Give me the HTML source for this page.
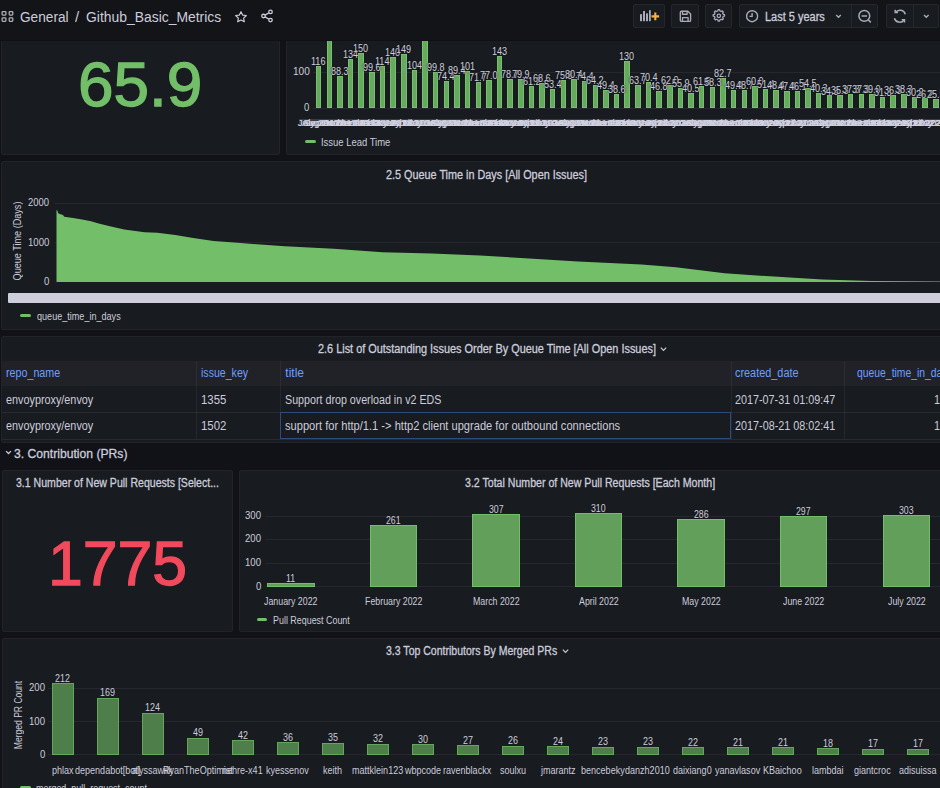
<!DOCTYPE html>
<html><head><meta charset="utf-8"><style>
html,body{margin:0;padding:0;}
body{width:940px;height:788px;overflow:hidden;background:#111217;position:relative;font-family:"Liberation Sans", sans-serif;}
.t{position:absolute;white-space:nowrap;}
.r{position:absolute;}
.clip{position:absolute;overflow:hidden;}
.p{position:absolute;background:#181b1f;border:1px solid #212328;border-radius:2px;box-sizing:border-box;}
.btn{position:absolute;background:#181b1f;border:1px solid #25272c;border-radius:2px;box-sizing:border-box;}
</style></head><body>
<div class="p" style="left:1px;top:20px;width:279px;height:135px;"></div>
<div class="p" style="left:286px;top:20px;width:660px;height:135px;"></div>
<div class="p" style="left:1px;top:161px;width:945px;height:169px;"></div>
<div class="p" style="left:1px;top:336px;width:945px;height:107px;"></div>
<div class="p" style="left:2px;top:470px;width:231px;height:162px;"></div>
<div class="p" style="left:239px;top:470px;width:707px;height:162px;"></div>
<div class="p" style="left:2px;top:638px;width:944px;height:160px;"></div>
<div class="r" style="left:0.00px;top:0.00px;width:940.00px;height:40.00px;background:#131418;"></div>
<div class="r" style="left:0.00px;top:39.50px;width:940.00px;height:1.00px;background:#0f1013;"></div>
<svg class="r" style="left:0;top:0" width="40" height="40"><g fill="none" stroke="#b0b1bd" stroke-width="1.25"><rect x="2.1" y="11.5" width="3.8" height="3.6" rx="0.8"/><rect x="9.2" y="11.5" width="3.6" height="3.6" rx="0.8"/><rect x="2.1" y="17.8" width="3.8" height="3.6" rx="0.8"/><rect x="9.2" y="17.8" width="3.6" height="3.6" rx="0.8"/></g></svg>
<div class="t" style="left:20.02px;top:7.65px;font-size:14.7px;line-height:19px;color:#ccccdc;font-weight:400;transform:scaleX(0.9294);transform-origin:0 0;">General</div>
<div class="t" style="left:75.00px;top:7.65px;font-size:14.7px;line-height:19px;color:#ccccdc;font-weight:400;transform:scaleX(1.0204);transform-origin:0 0;">/</div>
<div class="t" style="left:86.40px;top:7.65px;font-size:14.7px;line-height:19px;color:#ccccdc;font-weight:400;transform:scaleX(0.9463);transform-origin:0 0;">Github_Basic_Metrics</div>
<svg class="r" style="left:234px;top:10px" width="14" height="14" viewBox="0 0 24 24"><path d="M12 2.8l2.8 5.9 6.4.8-4.7 4.4 1.2 6.3L12 17.1l-5.7 3.1 1.2-6.3-4.7-4.4 6.4-.8z" fill="none" stroke="#ccccdc" stroke-width="2" stroke-linejoin="round"/></svg>
<svg class="r" style="left:260px;top:9.3px" width="14" height="14" viewBox="0 0 24 24"><g fill="none" stroke="#ccccdc" stroke-width="2.2"><circle cx="18" cy="5" r="3"/><circle cx="6" cy="12" r="3"/><circle cx="18" cy="19" r="3"/><path d="M8.6 10.5l6.8-4M8.6 13.5l6.8 4"/></g></svg>
<div class="btn" style="left:633px;top:4px;width:32px;height:24px;"></div>
<svg class="r" style="left:0;top:0" width="940" height="40"><g fill="#a9aab6"><rect x="640" y="14.2" width="2" height="7"/><rect x="643" y="11" width="2" height="10.2"/><rect x="646" y="13.4" width="2" height="7.8"/><rect x="649" y="10.2" width="1.8" height="11"/></g><path d="M655.3 12.6v7.6M651.5 16.4h7.6" stroke="#f7b23b" stroke-width="2.1"/></svg>
<div class="btn" style="left:671px;top:4px;width:28px;height:24px;"></div>
<svg class="r" style="left:0;top:0" width="940" height="40"><g fill="none" stroke="#a9aab6" stroke-width="1.35" stroke-linejoin="round"><path d="M681.5 11.2h6.3l2.8 2.8v6.2a1.2 1.2 0 0 1-1.2 1.2h-7.9a1.2 1.2 0 0 1-1.2-1.2v-7.8a1.2 1.2 0 0 1 1.2-1.2z"/><path d="M682.5 11.4v2.8h4.6v-2.8"/><path d="M682.5 21.2v-3.6h5.6v3.6"/></g></svg>
<div class="btn" style="left:705px;top:4px;width:27px;height:24px;"></div>
<svg class="r" style="left:710.9px;top:8.25px" width="15.7" height="15.7" viewBox="0 0 24 24"><g fill="none" stroke="#a9aab6" stroke-width="2" stroke-linejoin="round"><circle cx="12" cy="12" r="2.6"/><path d="M10.3 4.6l.6-2h2.2l.6 2 1.7.8 1.9-1 1.6 1.6-1 1.9.8 1.7 2 .6v2.2l-2 .6-.8 1.7 1 1.9-1.6 1.6-1.9-1-1.7.8-.6 2h-2.2l-.6-2-1.7-.8-1.9 1-1.6-1.6 1-1.9-.8-1.7-2-.6v-2.2l2-.6.8-1.7-1-1.9 1.6-1.6 1.9 1z"/></g></svg>
<div class="btn" style="left:739px;top:4px;width:139px;height:24px;"></div>
<div class="r" style="left:851.00px;top:5.00px;width:1.00px;height:22.00px;background:#25272c;"></div>
<svg class="r" style="left:0;top:0" width="940" height="40"><g fill="none" stroke="#a9aab6" stroke-width="1.4"><circle cx="752.1" cy="16.2" r="5.5"/><path d="M752.1 12.9v3.5h-2.6"/></g></svg>
<div class="t" style="left:764.82px;top:9.00px;font-size:12.5px;line-height:16px;color:#ccccdc;font-weight:400;transform:scaleX(0.8780);transform-origin:0 0;-webkit-text-stroke:0.3px #ccccdc;">Last 5 years</div>
<svg class="r" style="left:0;top:0" width="940" height="40"><path d="M836.2 15l2.3 2.3 2.3-2.3" fill="none" stroke="#a9aab6" stroke-width="1.4"/></svg>
<svg class="r" style="left:0;top:0" width="940" height="40"><g fill="none" stroke="#a9aab6" stroke-width="1.5"><circle cx="864.3" cy="15.9" r="5.4"/><path d="M861.6 15.9h5.4M868.2 19.8l2.6 2.6"/></g></svg>
<div class="btn" style="left:886px;top:4px;width:53px;height:24px;"></div>
<div class="r" style="left:913.00px;top:5.00px;width:1.00px;height:22.00px;background:#25272c;"></div>
<svg class="r" style="left:0;top:0" width="940" height="40"><g fill="none" stroke="#a9aab6" stroke-width="1.5"><path d="M905.3 14.2a5.6 5.6 0 0 0-9.8-1.8M894.4 18.2a5.6 5.6 0 0 0 9.8 1.8"/><path d="M895.2 9.8v2.8h2.8M904.5 22.6v-2.8h-2.8"/></g></svg>
<svg class="r" style="left:0;top:0" width="940" height="40"><path d="M924 15l2.3 2.3 2.3-2.3" fill="none" stroke="#a9aab6" stroke-width="1.4"/></svg>
<div class="t" style="left:77.71px;top:43.80px;font-size:62.4px;line-height:81px;color:#73bf69;font-weight:400;transform:scaleX(1.0239);transform-origin:0 0;-webkit-text-stroke:1.3px #73bf69;">65.9</div>
<div class="t" style="left:292.84px;top:65.20px;font-size:10.2px;line-height:13px;color:#ccccdc;font-weight:400;transform:scaleX(0.9898);transform-origin:0 0;">100</div>
<div class="t" style="left:304.31px;top:100.50px;font-size:10.2px;line-height:13px;color:#ccccdc;font-weight:400;transform:scaleX(0.9400);transform-origin:0 0;">0</div>
<div class="r" style="left:313.00px;top:72.00px;width:640.00px;height:1.00px;background:rgba(204,204,220,0.08);"></div>
<div class="r" style="left:313.00px;top:108.00px;width:640.00px;height:1.00px;background:rgba(204,204,220,0.08);"></div>
<div class="clip" style="left:286px;top:41px;width:654px;height:114px;">
<div class="r" style="left:29.90px;top:24.66px;width:5.50px;height:42.34px;background:#67aa5f;border:1px solid #76c26c;box-sizing:border-box;"></div>
<div class="r" style="left:40.54px;top:-2.35px;width:5.50px;height:69.35px;background:#67aa5f;border:1px solid #76c26c;box-sizing:border-box;"></div>
<div class="r" style="left:51.18px;top:34.77px;width:5.50px;height:32.23px;background:#67aa5f;border:1px solid #76c26c;box-sizing:border-box;"></div>
<div class="r" style="left:61.82px;top:18.09px;width:5.50px;height:48.91px;background:#67aa5f;border:1px solid #76c26c;box-sizing:border-box;"></div>
<div class="r" style="left:72.46px;top:12.25px;width:5.50px;height:54.75px;background:#67aa5f;border:1px solid #76c26c;box-sizing:border-box;"></div>
<div class="r" style="left:83.10px;top:30.65px;width:5.50px;height:36.35px;background:#67aa5f;border:1px solid #76c26c;box-sizing:border-box;"></div>
<div class="r" style="left:93.74px;top:25.39px;width:5.50px;height:41.61px;background:#67aa5f;border:1px solid #76c26c;box-sizing:border-box;"></div>
<div class="r" style="left:104.38px;top:15.90px;width:5.50px;height:51.10px;background:#67aa5f;border:1px solid #76c26c;box-sizing:border-box;"></div>
<div class="r" style="left:115.02px;top:12.62px;width:5.50px;height:54.38px;background:#67aa5f;border:1px solid #76c26c;box-sizing:border-box;"></div>
<div class="r" style="left:125.66px;top:29.04px;width:5.50px;height:37.96px;background:#67aa5f;border:1px solid #76c26c;box-sizing:border-box;"></div>
<div class="r" style="left:136.30px;top:-2.35px;width:5.50px;height:69.35px;background:#67aa5f;border:1px solid #76c26c;box-sizing:border-box;"></div>
<div class="r" style="left:146.94px;top:30.57px;width:5.50px;height:36.43px;background:#67aa5f;border:1px solid #76c26c;box-sizing:border-box;"></div>
<div class="r" style="left:157.58px;top:39.84px;width:5.50px;height:27.16px;background:#67aa5f;border:1px solid #76c26c;box-sizing:border-box;"></div>
<div class="r" style="left:168.22px;top:34.37px;width:5.50px;height:32.63px;background:#67aa5f;border:1px solid #76c26c;box-sizing:border-box;"></div>
<div class="r" style="left:178.86px;top:30.13px;width:5.50px;height:36.87px;background:#67aa5f;border:1px solid #76c26c;box-sizing:border-box;"></div>
<div class="r" style="left:189.50px;top:40.83px;width:5.50px;height:26.17px;background:#67aa5f;border:1px solid #76c26c;box-sizing:border-box;"></div>
<div class="r" style="left:200.14px;top:38.89px;width:5.50px;height:28.11px;background:#67aa5f;border:1px solid #76c26c;box-sizing:border-box;"></div>
<div class="r" style="left:210.78px;top:14.80px;width:5.50px;height:52.20px;background:#67aa5f;border:1px solid #76c26c;box-sizing:border-box;"></div>
<div class="r" style="left:221.42px;top:38.27px;width:5.50px;height:28.73px;background:#67aa5f;border:1px solid #76c26c;box-sizing:border-box;"></div>
<div class="r" style="left:232.06px;top:37.84px;width:5.50px;height:29.16px;background:#67aa5f;border:1px solid #76c26c;box-sizing:border-box;"></div>
<div class="r" style="left:242.70px;top:44.66px;width:5.50px;height:22.34px;background:#67aa5f;border:1px solid #76c26c;box-sizing:border-box;"></div>
<div class="r" style="left:253.34px;top:41.96px;width:5.50px;height:25.04px;background:#67aa5f;border:1px solid #76c26c;box-sizing:border-box;"></div>
<div class="r" style="left:263.98px;top:47.51px;width:5.50px;height:19.49px;background:#67aa5f;border:1px solid #76c26c;box-sizing:border-box;"></div>
<div class="r" style="left:274.62px;top:39.33px;width:5.50px;height:27.67px;background:#67aa5f;border:1px solid #76c26c;box-sizing:border-box;"></div>
<div class="r" style="left:285.26px;top:37.65px;width:5.50px;height:29.35px;background:#67aa5f;border:1px solid #76c26c;box-sizing:border-box;"></div>
<div class="r" style="left:295.90px;top:39.84px;width:5.50px;height:27.16px;background:#67aa5f;border:1px solid #76c26c;box-sizing:border-box;"></div>
<div class="r" style="left:306.54px;top:43.57px;width:5.50px;height:23.43px;background:#67aa5f;border:1px solid #76c26c;box-sizing:border-box;"></div>
<div class="r" style="left:317.18px;top:48.97px;width:5.50px;height:18.03px;background:#67aa5f;border:1px solid #76c26c;box-sizing:border-box;"></div>
<div class="r" style="left:327.82px;top:52.91px;width:5.50px;height:14.09px;background:#67aa5f;border:1px solid #76c26c;box-sizing:border-box;"></div>
<div class="r" style="left:338.46px;top:19.55px;width:5.50px;height:47.45px;background:#67aa5f;border:1px solid #76c26c;box-sizing:border-box;"></div>
<div class="r" style="left:349.10px;top:43.75px;width:5.50px;height:23.25px;background:#67aa5f;border:1px solid #76c26c;box-sizing:border-box;"></div>
<div class="r" style="left:359.74px;top:41.30px;width:5.50px;height:25.70px;background:#67aa5f;border:1px solid #76c26c;box-sizing:border-box;"></div>
<div class="r" style="left:370.38px;top:49.92px;width:5.50px;height:17.08px;background:#67aa5f;border:1px solid #76c26c;box-sizing:border-box;"></div>
<div class="r" style="left:381.02px;top:44.37px;width:5.50px;height:22.63px;background:#67aa5f;border:1px solid #76c26c;box-sizing:border-box;"></div>
<div class="r" style="left:391.66px;top:46.60px;width:5.50px;height:20.40px;background:#67aa5f;border:1px solid #76c26c;box-sizing:border-box;"></div>
<div class="r" style="left:402.30px;top:52.22px;width:5.50px;height:14.78px;background:#67aa5f;border:1px solid #76c26c;box-sizing:border-box;"></div>
<div class="r" style="left:412.94px;top:44.55px;width:5.50px;height:22.45px;background:#67aa5f;border:1px solid #76c26c;box-sizing:border-box;"></div>
<div class="r" style="left:423.58px;top:45.72px;width:5.50px;height:21.28px;background:#67aa5f;border:1px solid #76c26c;box-sizing:border-box;"></div>
<div class="r" style="left:434.22px;top:36.81px;width:5.50px;height:30.19px;background:#67aa5f;border:1px solid #76c26c;box-sizing:border-box;"></div>
<div class="r" style="left:444.86px;top:48.97px;width:5.50px;height:18.03px;background:#67aa5f;border:1px solid #76c26c;box-sizing:border-box;"></div>
<div class="r" style="left:455.50px;top:49.22px;width:5.50px;height:17.78px;background:#67aa5f;border:1px solid #76c26c;box-sizing:border-box;"></div>
<div class="r" style="left:466.14px;top:45.10px;width:5.50px;height:21.90px;background:#67aa5f;border:1px solid #76c26c;box-sizing:border-box;"></div>
<div class="r" style="left:476.78px;top:48.24px;width:5.50px;height:18.76px;background:#67aa5f;border:1px solid #76c26c;box-sizing:border-box;"></div>
<div class="r" style="left:487.42px;top:49.33px;width:5.50px;height:17.67px;background:#67aa5f;border:1px solid #76c26c;box-sizing:border-box;"></div>
<div class="r" style="left:498.06px;top:49.70px;width:5.50px;height:17.30px;background:#67aa5f;border:1px solid #76c26c;box-sizing:border-box;"></div>
<div class="r" style="left:508.70px;top:50.17px;width:5.50px;height:16.83px;background:#67aa5f;border:1px solid #76c26c;box-sizing:border-box;"></div>
<div class="r" style="left:519.34px;top:47.11px;width:5.50px;height:19.89px;background:#67aa5f;border:1px solid #76c26c;box-sizing:border-box;"></div>
<div class="r" style="left:529.98px;top:52.29px;width:5.50px;height:14.71px;background:#67aa5f;border:1px solid #76c26c;box-sizing:border-box;"></div>
<div class="r" style="left:540.62px;top:54.48px;width:5.50px;height:12.52px;background:#67aa5f;border:1px solid #76c26c;box-sizing:border-box;"></div>
<div class="r" style="left:551.26px;top:54.12px;width:5.50px;height:12.88px;background:#67aa5f;border:1px solid #76c26c;box-sizing:border-box;"></div>
<div class="r" style="left:561.90px;top:53.39px;width:5.50px;height:13.61px;background:#67aa5f;border:1px solid #76c26c;box-sizing:border-box;"></div>
<div class="r" style="left:572.54px;top:53.39px;width:5.50px;height:13.61px;background:#67aa5f;border:1px solid #76c26c;box-sizing:border-box;"></div>
<div class="r" style="left:583.18px;top:52.77px;width:5.50px;height:14.23px;background:#67aa5f;border:1px solid #76c26c;box-sizing:border-box;"></div>
<div class="r" style="left:593.82px;top:55.58px;width:5.50px;height:11.42px;background:#67aa5f;border:1px solid #76c26c;box-sizing:border-box;"></div>
<div class="r" style="left:604.46px;top:53.75px;width:5.50px;height:13.25px;background:#67aa5f;border:1px solid #76c26c;box-sizing:border-box;"></div>
<div class="r" style="left:615.10px;top:53.02px;width:5.50px;height:13.98px;background:#67aa5f;border:1px solid #76c26c;box-sizing:border-box;"></div>
<div class="r" style="left:625.74px;top:55.98px;width:5.50px;height:11.02px;background:#67aa5f;border:1px solid #76c26c;box-sizing:border-box;"></div>
<div class="r" style="left:636.38px;top:57.44px;width:5.50px;height:9.56px;background:#67aa5f;border:1px solid #76c26c;box-sizing:border-box;"></div>
<div class="r" style="left:647.02px;top:57.69px;width:5.50px;height:9.31px;background:#67aa5f;border:1px solid #76c26c;box-sizing:border-box;"></div>
<div class="t" style="left:25.26px;top:12.76px;font-size:10.8px;line-height:14px;color:#ccccdc;font-weight:400;transform:scaleX(0.8400);transform-origin:0 0;text-shadow:0 0 1.5px #181b1f,0 0 1px #181b1f;">116</div>
<div class="t" style="left:45.11px;top:22.87px;font-size:10.8px;line-height:14px;color:#ccccdc;font-weight:400;transform:scaleX(0.8400);transform-origin:0 0;text-shadow:0 0 1.5px #181b1f,0 0 1px #181b1f;">88.3</div>
<div class="t" style="left:56.79px;top:6.19px;font-size:10.8px;line-height:14px;color:#ccccdc;font-weight:400;transform:scaleX(0.8400);transform-origin:0 0;text-shadow:0 0 1.5px #181b1f,0 0 1px #181b1f;">134</div>
<div class="t" style="left:67.48px;top:0.35px;font-size:10.8px;line-height:14px;color:#ccccdc;font-weight:400;transform:scaleX(0.8400);transform-origin:0 0;text-shadow:0 0 1.5px #181b1f,0 0 1px #181b1f;">150</div>
<div class="t" style="left:77.00px;top:18.75px;font-size:10.8px;line-height:14px;color:#ccccdc;font-weight:400;transform:scaleX(0.8400);transform-origin:0 0;text-shadow:0 0 1.5px #181b1f,0 0 1px #181b1f;">99.6</div>
<div class="t" style="left:89.03px;top:13.49px;font-size:10.8px;line-height:14px;color:#ccccdc;font-weight:400;transform:scaleX(0.8400);transform-origin:0 0;text-shadow:0 0 1.5px #181b1f,0 0 1px #181b1f;">114</div>
<div class="t" style="left:99.40px;top:4.00px;font-size:10.8px;line-height:14px;color:#ccccdc;font-weight:400;transform:scaleX(0.8400);transform-origin:0 0;text-shadow:0 0 1.5px #181b1f,0 0 1px #181b1f;">140</div>
<div class="t" style="left:110.08px;top:0.72px;font-size:10.8px;line-height:14px;color:#ccccdc;font-weight:400;transform:scaleX(0.8400);transform-origin:0 0;text-shadow:0 0 1.5px #181b1f,0 0 1px #181b1f;">149</div>
<div class="t" style="left:120.63px;top:17.14px;font-size:10.8px;line-height:14px;color:#ccccdc;font-weight:400;transform:scaleX(0.8400);transform-origin:0 0;text-shadow:0 0 1.5px #181b1f,0 0 1px #181b1f;">104</div>
<div class="t" style="left:140.84px;top:18.67px;font-size:10.8px;line-height:14px;color:#ccccdc;font-weight:400;transform:scaleX(0.8400);transform-origin:0 0;text-shadow:0 0 1.5px #181b1f,0 0 1px #181b1f;">99.8</div>
<div class="t" style="left:151.39px;top:27.94px;font-size:10.8px;line-height:14px;color:#ccccdc;font-weight:400;transform:scaleX(0.8400);transform-origin:0 0;text-shadow:0 0 1.5px #181b1f,0 0 1px #181b1f;">74.4</div>
<div class="t" style="left:162.08px;top:22.47px;font-size:10.8px;line-height:14px;color:#ccccdc;font-weight:400;transform:scaleX(0.8400);transform-origin:0 0;text-shadow:0 0 1.5px #181b1f,0 0 1px #181b1f;">89.4</div>
<div class="t" style="left:173.92px;top:18.23px;font-size:10.8px;line-height:14px;color:#ccccdc;font-weight:400;transform:scaleX(0.8400);transform-origin:0 0;text-shadow:0 0 1.5px #181b1f,0 0 1px #181b1f;">101</div>
<div class="t" style="left:183.43px;top:28.93px;font-size:10.8px;line-height:14px;color:#ccccdc;font-weight:400;transform:scaleX(0.8400);transform-origin:0 0;text-shadow:0 0 1.5px #181b1f,0 0 1px #181b1f;">71.7</div>
<div class="t" style="left:194.00px;top:26.99px;font-size:10.8px;line-height:14px;color:#ccccdc;font-weight:400;transform:scaleX(0.8400);transform-origin:0 0;text-shadow:0 0 1.5px #181b1f,0 0 1px #181b1f;">77.0</div>
<div class="t" style="left:205.82px;top:2.91px;font-size:10.8px;line-height:14px;color:#ccccdc;font-weight:400;transform:scaleX(0.8400);transform-origin:0 0;text-shadow:0 0 1.5px #181b1f,0 0 1px #181b1f;">143</div>
<div class="t" style="left:215.35px;top:26.37px;font-size:10.8px;line-height:14px;color:#ccccdc;font-weight:400;transform:scaleX(0.8400);transform-origin:0 0;text-shadow:0 0 1.5px #181b1f,0 0 1px #181b1f;">78.7</div>
<div class="t" style="left:225.96px;top:25.94px;font-size:10.8px;line-height:14px;color:#ccccdc;font-weight:400;transform:scaleX(0.8400);transform-origin:0 0;text-shadow:0 0 1.5px #181b1f,0 0 1px #181b1f;">79.9</div>
<div class="t" style="left:236.63px;top:32.76px;font-size:10.8px;line-height:14px;color:#ccccdc;font-weight:400;transform:scaleX(0.8400);transform-origin:0 0;text-shadow:0 0 1.5px #181b1f,0 0 1px #181b1f;">61.2</div>
<div class="t" style="left:247.22px;top:30.06px;font-size:10.8px;line-height:14px;color:#ccccdc;font-weight:400;transform:scaleX(0.8400);transform-origin:0 0;text-shadow:0 0 1.5px #181b1f,0 0 1px #181b1f;">68.6</div>
<div class="t" style="left:257.84px;top:35.61px;font-size:10.8px;line-height:14px;color:#ccccdc;font-weight:400;transform:scaleX(0.8400);transform-origin:0 0;text-shadow:0 0 1.5px #181b1f,0 0 1px #181b1f;">53.4</div>
<div class="t" style="left:268.50px;top:27.43px;font-size:10.8px;line-height:14px;color:#ccccdc;font-weight:400;transform:scaleX(0.8400);transform-origin:0 0;text-shadow:0 0 1.5px #181b1f,0 0 1px #181b1f;">75.8</div>
<div class="t" style="left:279.12px;top:25.75px;font-size:10.8px;line-height:14px;color:#ccccdc;font-weight:400;transform:scaleX(0.8400);transform-origin:0 0;text-shadow:0 0 1.5px #181b1f,0 0 1px #181b1f;">80.4</div>
<div class="t" style="left:289.71px;top:27.94px;font-size:10.8px;line-height:14px;color:#ccccdc;font-weight:400;transform:scaleX(0.8400);transform-origin:0 0;text-shadow:0 0 1.5px #181b1f,0 0 1px #181b1f;">74.4</div>
<div class="t" style="left:300.47px;top:31.67px;font-size:10.8px;line-height:14px;color:#ccccdc;font-weight:400;transform:scaleX(0.8400);transform-origin:0 0;text-shadow:0 0 1.5px #181b1f,0 0 1px #181b1f;">64.2</div>
<div class="t" style="left:311.13px;top:37.07px;font-size:10.8px;line-height:14px;color:#ccccdc;font-weight:400;transform:scaleX(0.8400);transform-origin:0 0;text-shadow:0 0 1.5px #181b1f,0 0 1px #181b1f;">49.4</div>
<div class="t" style="left:321.77px;top:41.01px;font-size:10.8px;line-height:14px;color:#ccccdc;font-weight:400;transform:scaleX(0.8400);transform-origin:0 0;text-shadow:0 0 1.5px #181b1f,0 0 1px #181b1f;">38.6</div>
<div class="t" style="left:333.48px;top:7.65px;font-size:10.8px;line-height:14px;color:#ccccdc;font-weight:400;transform:scaleX(0.8400);transform-origin:0 0;text-shadow:0 0 1.5px #181b1f,0 0 1px #181b1f;">130</div>
<div class="t" style="left:343.03px;top:31.85px;font-size:10.8px;line-height:14px;color:#ccccdc;font-weight:400;transform:scaleX(0.8400);transform-origin:0 0;text-shadow:0 0 1.5px #181b1f,0 0 1px #181b1f;">63.7</div>
<div class="t" style="left:353.55px;top:29.40px;font-size:10.8px;line-height:14px;color:#ccccdc;font-weight:400;transform:scaleX(0.8400);transform-origin:0 0;text-shadow:0 0 1.5px #181b1f,0 0 1px #181b1f;">70.4</div>
<div class="t" style="left:364.40px;top:38.02px;font-size:10.8px;line-height:14px;color:#ccccdc;font-weight:400;transform:scaleX(0.8400);transform-origin:0 0;text-shadow:0 0 1.5px #181b1f,0 0 1px #181b1f;">46.8</div>
<div class="t" style="left:374.88px;top:32.47px;font-size:10.8px;line-height:14px;color:#ccccdc;font-weight:400;transform:scaleX(0.8400);transform-origin:0 0;text-shadow:0 0 1.5px #181b1f,0 0 1px #181b1f;">62.0</div>
<div class="t" style="left:385.61px;top:34.70px;font-size:10.8px;line-height:14px;color:#ccccdc;font-weight:400;transform:scaleX(0.8400);transform-origin:0 0;text-shadow:0 0 1.5px #181b1f,0 0 1px #181b1f;">55.9</div>
<div class="t" style="left:396.32px;top:40.32px;font-size:10.8px;line-height:14px;color:#ccccdc;font-weight:400;transform:scaleX(0.8400);transform-origin:0 0;text-shadow:0 0 1.5px #181b1f,0 0 1px #181b1f;">40.5</div>
<div class="t" style="left:406.82px;top:32.65px;font-size:10.8px;line-height:14px;color:#ccccdc;font-weight:400;transform:scaleX(0.8400);transform-origin:0 0;text-shadow:0 0 1.5px #181b1f,0 0 1px #181b1f;">61.5</div>
<div class="t" style="left:417.51px;top:33.82px;font-size:10.8px;line-height:14px;color:#ccccdc;font-weight:400;transform:scaleX(0.8400);transform-origin:0 0;text-shadow:0 0 1.5px #181b1f,0 0 1px #181b1f;">58.3</div>
<div class="t" style="left:428.19px;top:24.91px;font-size:10.8px;line-height:14px;color:#ccccdc;font-weight:400;transform:scaleX(0.8400);transform-origin:0 0;text-shadow:0 0 1.5px #181b1f,0 0 1px #181b1f;">82.7</div>
<div class="t" style="left:438.81px;top:37.07px;font-size:10.8px;line-height:14px;color:#ccccdc;font-weight:400;transform:scaleX(0.8400);transform-origin:0 0;text-shadow:0 0 1.5px #181b1f,0 0 1px #181b1f;">49.4</div>
<div class="t" style="left:449.56px;top:37.32px;font-size:10.8px;line-height:14px;color:#ccccdc;font-weight:400;transform:scaleX(0.8400);transform-origin:0 0;text-shadow:0 0 1.5px #181b1f,0 0 1px #181b1f;">48.7</div>
<div class="t" style="left:460.00px;top:33.20px;font-size:10.8px;line-height:14px;color:#ccccdc;font-weight:400;transform:scaleX(0.8400);transform-origin:0 0;text-shadow:0 0 1.5px #181b1f,0 0 1px #181b1f;">60.0</div>
<div class="t" style="left:470.64px;top:36.34px;font-size:10.8px;line-height:14px;color:#ccccdc;font-weight:400;transform:scaleX(0.8400);transform-origin:0 0;text-shadow:0 0 1.5px #181b1f,0 0 1px #181b1f;">51.4</div>
<div class="t" style="left:481.37px;top:37.43px;font-size:10.8px;line-height:14px;color:#ccccdc;font-weight:400;transform:scaleX(0.8400);transform-origin:0 0;text-shadow:0 0 1.5px #181b1f,0 0 1px #181b1f;">48.4</div>
<div class="t" style="left:492.01px;top:37.80px;font-size:10.8px;line-height:14px;color:#ccccdc;font-weight:400;transform:scaleX(0.8400);transform-origin:0 0;text-shadow:0 0 1.5px #181b1f,0 0 1px #181b1f;">47.4</div>
<div class="t" style="left:502.74px;top:38.27px;font-size:10.8px;line-height:14px;color:#ccccdc;font-weight:400;transform:scaleX(0.8400);transform-origin:0 0;text-shadow:0 0 1.5px #181b1f,0 0 1px #181b1f;">46.1</div>
<div class="t" style="left:513.27px;top:35.21px;font-size:10.8px;line-height:14px;color:#ccccdc;font-weight:400;transform:scaleX(0.8400);transform-origin:0 0;text-shadow:0 0 1.5px #181b1f,0 0 1px #181b1f;">54.5</div>
<div class="t" style="left:524.00px;top:40.39px;font-size:10.8px;line-height:14px;color:#ccccdc;font-weight:400;transform:scaleX(0.8400);transform-origin:0 0;text-shadow:0 0 1.5px #181b1f,0 0 1px #181b1f;">40.3</div>
<div class="t" style="left:534.57px;top:42.58px;font-size:10.8px;line-height:14px;color:#ccccdc;font-weight:400;transform:scaleX(0.8400);transform-origin:0 0;text-shadow:0 0 1.5px #181b1f,0 0 1px #181b1f;">34.3</div>
<div class="t" style="left:545.21px;top:42.22px;font-size:10.8px;line-height:14px;color:#ccccdc;font-weight:400;transform:scaleX(0.8400);transform-origin:0 0;text-shadow:0 0 1.5px #181b1f,0 0 1px #181b1f;">35.3</div>
<div class="t" style="left:555.85px;top:41.49px;font-size:10.8px;line-height:14px;color:#ccccdc;font-weight:400;transform:scaleX(0.8400);transform-origin:0 0;text-shadow:0 0 1.5px #181b1f,0 0 1px #181b1f;">37.3</div>
<div class="t" style="left:566.49px;top:41.49px;font-size:10.8px;line-height:14px;color:#ccccdc;font-weight:400;transform:scaleX(0.8400);transform-origin:0 0;text-shadow:0 0 1.5px #181b1f,0 0 1px #181b1f;">37.3</div>
<div class="t" style="left:577.11px;top:40.87px;font-size:10.8px;line-height:14px;color:#ccccdc;font-weight:400;transform:scaleX(0.8400);transform-origin:0 0;text-shadow:0 0 1.5px #181b1f,0 0 1px #181b1f;">39.0</div>
<div class="t" style="left:587.77px;top:43.68px;font-size:10.8px;line-height:14px;color:#ccccdc;font-weight:400;transform:scaleX(0.8400);transform-origin:0 0;text-shadow:0 0 1.5px #181b1f,0 0 1px #181b1f;">31.3</div>
<div class="t" style="left:598.41px;top:41.85px;font-size:10.8px;line-height:14px;color:#ccccdc;font-weight:400;transform:scaleX(0.8400);transform-origin:0 0;text-shadow:0 0 1.5px #181b1f,0 0 1px #181b1f;">36.3</div>
<div class="t" style="left:609.05px;top:41.12px;font-size:10.8px;line-height:14px;color:#ccccdc;font-weight:400;transform:scaleX(0.8400);transform-origin:0 0;text-shadow:0 0 1.5px #181b1f,0 0 1px #181b1f;">38.3</div>
<div class="t" style="left:619.74px;top:44.08px;font-size:10.8px;line-height:14px;color:#ccccdc;font-weight:400;transform:scaleX(0.8400);transform-origin:0 0;text-shadow:0 0 1.5px #181b1f,0 0 1px #181b1f;">30.2</div>
<div class="t" style="left:630.31px;top:45.54px;font-size:10.8px;line-height:14px;color:#ccccdc;font-weight:400;transform:scaleX(0.8400);transform-origin:0 0;text-shadow:0 0 1.5px #181b1f,0 0 1px #181b1f;">26.2</div>
<div class="t" style="left:640.90px;top:45.79px;font-size:10.8px;line-height:14px;color:#ccccdc;font-weight:400;transform:scaleX(0.8400);transform-origin:0 0;text-shadow:0 0 1.5px #181b1f,0 0 1px #181b1f;">25.5</div>
<div class="t" style="left:11.85px;top:74.50px;font-size:9.8px;line-height:13px;color:#d4d4e0;font-weight:400;transform:scaleX(1.0000);transform-origin:0 0;-webkit-text-stroke:0.15px #d4d4e0;">July 2017</div>
<div class="t" style="left:16.02px;top:74.50px;font-size:9.8px;line-height:13px;color:#d4d4e0;font-weight:400;transform:scaleX(1.0000);transform-origin:0 0;-webkit-text-stroke:0.15px #d4d4e0;">August 2017</div>
<div class="t" style="left:17.72px;top:74.50px;font-size:9.8px;line-height:13px;color:#d4d4e0;font-weight:400;transform:scaleX(1.0000);transform-origin:0 0;-webkit-text-stroke:0.15px #d4d4e0;">September 2017</div>
<div class="t" style="left:34.90px;top:74.50px;font-size:9.8px;line-height:13px;color:#d4d4e0;font-weight:400;transform:scaleX(1.0000);transform-origin:0 0;-webkit-text-stroke:0.15px #d4d4e0;">October 2017</div>
<div class="t" style="left:40.20px;top:74.50px;font-size:9.8px;line-height:13px;color:#d4d4e0;font-weight:400;transform:scaleX(1.0000);transform-origin:0 0;-webkit-text-stroke:0.15px #d4d4e0;">November 2017</div>
<div class="t" style="left:50.84px;top:74.50px;font-size:9.8px;line-height:13px;color:#d4d4e0;font-weight:400;transform:scaleX(1.0000);transform-origin:0 0;-webkit-text-stroke:0.15px #d4d4e0;">December 2017</div>
<div class="t" style="left:66.92px;top:74.50px;font-size:9.8px;line-height:13px;color:#d4d4e0;font-weight:400;transform:scaleX(1.0000);transform-origin:0 0;-webkit-text-stroke:0.15px #d4d4e0;">January 2018</div>
<div class="t" style="left:75.06px;top:74.50px;font-size:9.8px;line-height:13px;color:#d4d4e0;font-weight:400;transform:scaleX(1.0000);transform-origin:0 0;-webkit-text-stroke:0.15px #d4d4e0;">February 2018</div>
<div class="t" style="left:91.70px;top:74.50px;font-size:9.8px;line-height:13px;color:#d4d4e0;font-weight:400;transform:scaleX(1.0000);transform-origin:0 0;-webkit-text-stroke:0.15px #d4d4e0;">March 2018</div>
<div class="t" style="left:106.56px;top:74.50px;font-size:9.8px;line-height:13px;color:#d4d4e0;font-weight:400;transform:scaleX(1.0000);transform-origin:0 0;-webkit-text-stroke:0.15px #d4d4e0;">April 2018</div>
<div class="t" style="left:117.34px;top:74.50px;font-size:9.8px;line-height:13px;color:#d4d4e0;font-weight:400;transform:scaleX(1.0000);transform-origin:0 0;-webkit-text-stroke:0.15px #d4d4e0;">May 2018</div>
<div class="t" style="left:126.93px;top:74.50px;font-size:9.8px;line-height:13px;color:#d4d4e0;font-weight:400;transform:scaleX(1.0000);transform-origin:0 0;-webkit-text-stroke:0.15px #d4d4e0;">June 2018</div>
<div class="t" style="left:139.48px;top:74.50px;font-size:9.8px;line-height:13px;color:#d4d4e0;font-weight:400;transform:scaleX(1.0000);transform-origin:0 0;-webkit-text-stroke:0.15px #d4d4e0;">July 2018</div>
<div class="t" style="left:143.65px;top:74.50px;font-size:9.8px;line-height:13px;color:#d4d4e0;font-weight:400;transform:scaleX(1.0000);transform-origin:0 0;-webkit-text-stroke:0.15px #d4d4e0;">August 2018</div>
<div class="t" style="left:145.35px;top:74.50px;font-size:9.8px;line-height:13px;color:#d4d4e0;font-weight:400;transform:scaleX(1.0000);transform-origin:0 0;-webkit-text-stroke:0.15px #d4d4e0;">September 2018</div>
<div class="t" style="left:162.53px;top:74.50px;font-size:9.8px;line-height:13px;color:#d4d4e0;font-weight:400;transform:scaleX(1.0000);transform-origin:0 0;-webkit-text-stroke:0.15px #d4d4e0;">October 2018</div>
<div class="t" style="left:167.83px;top:74.50px;font-size:9.8px;line-height:13px;color:#d4d4e0;font-weight:400;transform:scaleX(1.0000);transform-origin:0 0;-webkit-text-stroke:0.15px #d4d4e0;">November 2018</div>
<div class="t" style="left:178.47px;top:74.50px;font-size:9.8px;line-height:13px;color:#d4d4e0;font-weight:400;transform:scaleX(1.0000);transform-origin:0 0;-webkit-text-stroke:0.15px #d4d4e0;">December 2018</div>
<div class="t" style="left:194.62px;top:74.50px;font-size:9.8px;line-height:13px;color:#d4d4e0;font-weight:400;transform:scaleX(1.0000);transform-origin:0 0;-webkit-text-stroke:0.15px #d4d4e0;">January 2019</div>
<div class="t" style="left:202.76px;top:74.50px;font-size:9.8px;line-height:13px;color:#d4d4e0;font-weight:400;transform:scaleX(1.0000);transform-origin:0 0;-webkit-text-stroke:0.15px #d4d4e0;">February 2019</div>
<div class="t" style="left:219.41px;top:74.50px;font-size:9.8px;line-height:13px;color:#d4d4e0;font-weight:400;transform:scaleX(1.0000);transform-origin:0 0;-webkit-text-stroke:0.15px #d4d4e0;">March 2019</div>
<div class="t" style="left:234.26px;top:74.50px;font-size:9.8px;line-height:13px;color:#d4d4e0;font-weight:400;transform:scaleX(1.0000);transform-origin:0 0;-webkit-text-stroke:0.15px #d4d4e0;">April 2019</div>
<div class="t" style="left:245.05px;top:74.50px;font-size:9.8px;line-height:13px;color:#d4d4e0;font-weight:400;transform:scaleX(1.0000);transform-origin:0 0;-webkit-text-stroke:0.15px #d4d4e0;">May 2019</div>
<div class="t" style="left:254.63px;top:74.50px;font-size:9.8px;line-height:13px;color:#d4d4e0;font-weight:400;transform:scaleX(1.0000);transform-origin:0 0;-webkit-text-stroke:0.15px #d4d4e0;">June 2019</div>
<div class="t" style="left:267.19px;top:74.50px;font-size:9.8px;line-height:13px;color:#d4d4e0;font-weight:400;transform:scaleX(1.0000);transform-origin:0 0;-webkit-text-stroke:0.15px #d4d4e0;">July 2019</div>
<div class="t" style="left:271.36px;top:74.50px;font-size:9.8px;line-height:13px;color:#d4d4e0;font-weight:400;transform:scaleX(1.0000);transform-origin:0 0;-webkit-text-stroke:0.15px #d4d4e0;">August 2019</div>
<div class="t" style="left:273.05px;top:74.50px;font-size:9.8px;line-height:13px;color:#d4d4e0;font-weight:400;transform:scaleX(1.0000);transform-origin:0 0;-webkit-text-stroke:0.15px #d4d4e0;">September 2019</div>
<div class="t" style="left:290.24px;top:74.50px;font-size:9.8px;line-height:13px;color:#d4d4e0;font-weight:400;transform:scaleX(1.0000);transform-origin:0 0;-webkit-text-stroke:0.15px #d4d4e0;">October 2019</div>
<div class="t" style="left:295.53px;top:74.50px;font-size:9.8px;line-height:13px;color:#d4d4e0;font-weight:400;transform:scaleX(1.0000);transform-origin:0 0;-webkit-text-stroke:0.15px #d4d4e0;">November 2019</div>
<div class="t" style="left:306.18px;top:74.50px;font-size:9.8px;line-height:13px;color:#d4d4e0;font-weight:400;transform:scaleX(1.0000);transform-origin:0 0;-webkit-text-stroke:0.15px #d4d4e0;">December 2019</div>
<div class="t" style="left:322.25px;top:74.50px;font-size:9.8px;line-height:13px;color:#d4d4e0;font-weight:400;transform:scaleX(1.0000);transform-origin:0 0;-webkit-text-stroke:0.15px #d4d4e0;">January 2020</div>
<div class="t" style="left:330.40px;top:74.50px;font-size:9.8px;line-height:13px;color:#d4d4e0;font-weight:400;transform:scaleX(1.0000);transform-origin:0 0;-webkit-text-stroke:0.15px #d4d4e0;">February 2020</div>
<div class="t" style="left:347.04px;top:74.50px;font-size:9.8px;line-height:13px;color:#d4d4e0;font-weight:400;transform:scaleX(1.0000);transform-origin:0 0;-webkit-text-stroke:0.15px #d4d4e0;">March 2020</div>
<div class="t" style="left:361.89px;top:74.50px;font-size:9.8px;line-height:13px;color:#d4d4e0;font-weight:400;transform:scaleX(1.0000);transform-origin:0 0;-webkit-text-stroke:0.15px #d4d4e0;">April 2020</div>
<div class="t" style="left:372.68px;top:74.50px;font-size:9.8px;line-height:13px;color:#d4d4e0;font-weight:400;transform:scaleX(1.0000);transform-origin:0 0;-webkit-text-stroke:0.15px #d4d4e0;">May 2020</div>
<div class="t" style="left:382.26px;top:74.50px;font-size:9.8px;line-height:13px;color:#d4d4e0;font-weight:400;transform:scaleX(1.0000);transform-origin:0 0;-webkit-text-stroke:0.15px #d4d4e0;">June 2020</div>
<div class="t" style="left:394.82px;top:74.50px;font-size:9.8px;line-height:13px;color:#d4d4e0;font-weight:400;transform:scaleX(1.0000);transform-origin:0 0;-webkit-text-stroke:0.15px #d4d4e0;">July 2020</div>
<div class="t" style="left:398.99px;top:74.50px;font-size:9.8px;line-height:13px;color:#d4d4e0;font-weight:400;transform:scaleX(1.0000);transform-origin:0 0;-webkit-text-stroke:0.15px #d4d4e0;">August 2020</div>
<div class="t" style="left:400.69px;top:74.50px;font-size:9.8px;line-height:13px;color:#d4d4e0;font-weight:400;transform:scaleX(1.0000);transform-origin:0 0;-webkit-text-stroke:0.15px #d4d4e0;">September 2020</div>
<div class="t" style="left:417.87px;top:74.50px;font-size:9.8px;line-height:13px;color:#d4d4e0;font-weight:400;transform:scaleX(1.0000);transform-origin:0 0;-webkit-text-stroke:0.15px #d4d4e0;">October 2020</div>
<div class="t" style="left:423.17px;top:74.50px;font-size:9.8px;line-height:13px;color:#d4d4e0;font-weight:400;transform:scaleX(1.0000);transform-origin:0 0;-webkit-text-stroke:0.15px #d4d4e0;">November 2020</div>
<div class="t" style="left:433.81px;top:74.50px;font-size:9.8px;line-height:13px;color:#d4d4e0;font-weight:400;transform:scaleX(1.0000);transform-origin:0 0;-webkit-text-stroke:0.15px #d4d4e0;">December 2020</div>
<div class="t" style="left:449.98px;top:74.50px;font-size:9.8px;line-height:13px;color:#d4d4e0;font-weight:400;transform:scaleX(1.0000);transform-origin:0 0;-webkit-text-stroke:0.15px #d4d4e0;">January 2021</div>
<div class="t" style="left:458.12px;top:74.50px;font-size:9.8px;line-height:13px;color:#d4d4e0;font-weight:400;transform:scaleX(1.0000);transform-origin:0 0;-webkit-text-stroke:0.15px #d4d4e0;">February 2021</div>
<div class="t" style="left:474.77px;top:74.50px;font-size:9.8px;line-height:13px;color:#d4d4e0;font-weight:400;transform:scaleX(1.0000);transform-origin:0 0;-webkit-text-stroke:0.15px #d4d4e0;">March 2021</div>
<div class="t" style="left:489.62px;top:74.50px;font-size:9.8px;line-height:13px;color:#d4d4e0;font-weight:400;transform:scaleX(1.0000);transform-origin:0 0;-webkit-text-stroke:0.15px #d4d4e0;">April 2021</div>
<div class="t" style="left:500.41px;top:74.50px;font-size:9.8px;line-height:13px;color:#d4d4e0;font-weight:400;transform:scaleX(1.0000);transform-origin:0 0;-webkit-text-stroke:0.15px #d4d4e0;">May 2021</div>
<div class="t" style="left:509.99px;top:74.50px;font-size:9.8px;line-height:13px;color:#d4d4e0;font-weight:400;transform:scaleX(1.0000);transform-origin:0 0;-webkit-text-stroke:0.15px #d4d4e0;">June 2021</div>
<div class="t" style="left:522.54px;top:74.50px;font-size:9.8px;line-height:13px;color:#d4d4e0;font-weight:400;transform:scaleX(1.0000);transform-origin:0 0;-webkit-text-stroke:0.15px #d4d4e0;">July 2021</div>
<div class="t" style="left:526.72px;top:74.50px;font-size:9.8px;line-height:13px;color:#d4d4e0;font-weight:400;transform:scaleX(1.0000);transform-origin:0 0;-webkit-text-stroke:0.15px #d4d4e0;">August 2021</div>
<div class="t" style="left:528.41px;top:74.50px;font-size:9.8px;line-height:13px;color:#d4d4e0;font-weight:400;transform:scaleX(1.0000);transform-origin:0 0;-webkit-text-stroke:0.15px #d4d4e0;">September 2021</div>
<div class="t" style="left:545.60px;top:74.50px;font-size:9.8px;line-height:13px;color:#d4d4e0;font-weight:400;transform:scaleX(1.0000);transform-origin:0 0;-webkit-text-stroke:0.15px #d4d4e0;">October 2021</div>
<div class="t" style="left:550.89px;top:74.50px;font-size:9.8px;line-height:13px;color:#d4d4e0;font-weight:400;transform:scaleX(1.0000);transform-origin:0 0;-webkit-text-stroke:0.15px #d4d4e0;">November 2021</div>
<div class="t" style="left:561.54px;top:74.50px;font-size:9.8px;line-height:13px;color:#d4d4e0;font-weight:400;transform:scaleX(1.0000);transform-origin:0 0;-webkit-text-stroke:0.15px #d4d4e0;">December 2021</div>
<div class="t" style="left:577.69px;top:74.50px;font-size:9.8px;line-height:13px;color:#d4d4e0;font-weight:400;transform:scaleX(1.0000);transform-origin:0 0;-webkit-text-stroke:0.15px #d4d4e0;">January 2022</div>
<div class="t" style="left:585.83px;top:74.50px;font-size:9.8px;line-height:13px;color:#d4d4e0;font-weight:400;transform:scaleX(1.0000);transform-origin:0 0;-webkit-text-stroke:0.15px #d4d4e0;">February 2022</div>
<div class="t" style="left:602.47px;top:74.50px;font-size:9.8px;line-height:13px;color:#d4d4e0;font-weight:400;transform:scaleX(1.0000);transform-origin:0 0;-webkit-text-stroke:0.15px #d4d4e0;">March 2022</div>
<div class="t" style="left:617.33px;top:74.50px;font-size:9.8px;line-height:13px;color:#d4d4e0;font-weight:400;transform:scaleX(1.0000);transform-origin:0 0;-webkit-text-stroke:0.15px #d4d4e0;">April 2022</div>
<div class="t" style="left:628.11px;top:74.50px;font-size:9.8px;line-height:13px;color:#d4d4e0;font-weight:400;transform:scaleX(1.0000);transform-origin:0 0;-webkit-text-stroke:0.15px #d4d4e0;">May 2022</div>
</div>
<div class="r" style="left:299.00px;top:119.20px;width:641.00px;height:6.80px;background:rgba(205,205,220,0.18);"></div>
<div class="r" style="left:305.00px;top:140.00px;width:11.00px;height:3.00px;background:#73bf69;border-radius:1.5px;"></div>
<div class="t" style="left:321.15px;top:135.20px;font-size:11px;line-height:14px;color:#ccccdc;font-weight:400;transform:scaleX(0.8580);transform-origin:0 0;">Issue Lead Time</div>
<div class="t" style="left:386.26px;top:166.60px;font-size:12px;line-height:16px;color:#ccccdc;font-weight:400;transform:scaleX(0.9022);transform-origin:0 0;-webkit-text-stroke:0.3px #ccccdc;">2.5 Queue Time in Days [All Open Issues]</div>
<div class="t" style="left:28.23px;top:195.70px;font-size:10.2px;line-height:13px;color:#ccccdc;font-weight:400;transform:scaleX(0.9300);transform-origin:0 0;">2000</div>
<div class="t" style="left:28.00px;top:236.20px;font-size:10.2px;line-height:13px;color:#ccccdc;font-weight:400;transform:scaleX(0.9400);transform-origin:0 0;">1000</div>
<div class="t" style="left:44.01px;top:275.20px;font-size:10.2px;line-height:13px;color:#ccccdc;font-weight:400;transform:scaleX(0.9400);transform-origin:0 0;">0</div>
<div class="r" style="left:17.7px;top:240.85px;width:0;height:0;"><div class="t" style="left:0;top:0;transform:translate(-50%,-50%) rotate(-90deg);font-size:10px;line-height:12px;color:#ccccdc;"><span style="display:inline-block;transform:scaleX(0.91);">Queue Time (Days)</span></div></div>
<div class="r" style="left:55.00px;top:202.50px;width:890.00px;height:1.00px;background:rgba(204,204,220,0.08);"></div>
<div class="r" style="left:55.00px;top:242.00px;width:890.00px;height:1.00px;background:rgba(204,204,220,0.08);"></div>
<svg class="r" style="left:0;top:0" width="940" height="788"><path d="M56.5 282.0 L56.5 209.8 L57.4 210.8 L58.4 213.4 L63.0 214.9 L64.3 216.7 L73.2 218.0 L83.4 219.8 L91.0 221.3 L98.7 223.6 L108.9 226.1 L124.2 229.5 L144.7 232.3 L157.4 232.8 L175.3 235.1 L193.2 237.9 L213.6 241.0 L234.0 242.5 L257.0 244.3 L284.7 246.3 L333.7 248.7 L382.6 252.2 L431.6 253.6 L480.0 255.5 L529.0 258.5 L578.0 261.5 L641.5 264.4 L675.8 267.3 L724.7 273.2 L773.7 276.6 L822.6 279.6 L871.6 281.0 L940.0 281.5 L940.0 282.0 Z" fill="#73bf69"/></svg>
<div class="r" style="left:8.00px;top:292.70px;width:940.00px;height:10.20px;background:#cdcddc;border-radius:1px;"></div>
<div class="r" style="left:19.80px;top:314.00px;width:11.00px;height:3.00px;background:#73bf69;border-radius:1.5px;"></div>
<div class="t" style="left:36.64px;top:308.50px;font-size:11px;line-height:14px;color:#ccccdc;font-weight:400;transform:scaleX(0.8242);transform-origin:0 0;">queue_time_in_days</div>
<div class="t" style="left:317.66px;top:340.80px;font-size:12px;line-height:16px;color:#ccccdc;font-weight:400;transform:scaleX(0.9080);transform-origin:0 0;-webkit-text-stroke:0.3px #ccccdc;">2.6 List of Outstanding Issues Order By Queue Time [All Open Issues]</div>
<svg class="r" style="left:659px;top:345px" width="9" height="8" viewBox="0 0 10 8"><path d="M2 2.5l3 3 3-3" fill="none" stroke="#ccccdc" stroke-width="1.3"/></svg>
<div class="r" style="left:2.00px;top:361.00px;width:944.00px;height:25.00px;background:#202227;"></div>
<div class="r" style="left:2.00px;top:411.50px;width:944.00px;height:1.00px;background:rgba(204,204,220,0.09);"></div>
<div class="r" style="left:2.00px;top:438.50px;width:944.00px;height:1.00px;background:rgba(204,204,220,0.09);"></div>
<div class="r" style="left:196.00px;top:361.00px;width:1.00px;height:78.00px;background:rgba(204,204,220,0.07);"></div>
<div class="r" style="left:280.20px;top:361.00px;width:1.00px;height:78.00px;background:rgba(204,204,220,0.07);"></div>
<div class="r" style="left:730.70px;top:361.00px;width:1.00px;height:78.00px;background:rgba(204,204,220,0.07);"></div>
<div class="r" style="left:844.40px;top:361.00px;width:1.00px;height:78.00px;background:rgba(204,204,220,0.07);"></div>
<div class="t" style="left:5.70px;top:365.10px;font-size:12px;line-height:16px;color:#6e9fff;font-weight:400;transform:scaleX(0.8930);transform-origin:0 0;">repo_name</div>
<div class="t" style="left:200.91px;top:365.10px;font-size:12px;line-height:16px;color:#6e9fff;font-weight:400;transform:scaleX(0.8828);transform-origin:0 0;">issue_key</div>
<div class="t" style="left:285.32px;top:365.10px;font-size:12px;line-height:16px;color:#6e9fff;font-weight:400;transform:scaleX(1.0000);transform-origin:0 0;">title</div>
<div class="t" style="left:735.26px;top:365.10px;font-size:12px;line-height:16px;color:#6e9fff;font-weight:400;transform:scaleX(0.9065);transform-origin:0 0;">created_date</div>
<div class="t" style="left:856.58px;top:365.10px;font-size:12px;line-height:16px;color:#6e9fff;font-weight:400;transform:scaleX(0.8647);transform-origin:0 0;">queue_time_in_days</div>
<div class="t" style="left:5.97px;top:391.50px;font-size:12px;line-height:16px;color:#ccccdc;font-weight:400;transform:scaleX(0.9019);transform-origin:0 0;">envoyproxy/envoy</div>
<div class="t" style="left:200.65px;top:391.50px;font-size:12px;line-height:16px;color:#ccccdc;font-weight:400;transform:scaleX(0.9479);transform-origin:0 0;">1355</div>
<div class="t" style="left:285.02px;top:391.50px;font-size:12px;line-height:16px;color:#ccccdc;font-weight:400;transform:scaleX(0.8918);transform-origin:0 0;">Support drop overload in v2 EDS</div>
<div class="t" style="left:735.16px;top:391.50px;font-size:12px;line-height:16px;color:#ccccdc;font-weight:400;transform:scaleX(0.8991);transform-origin:0 0;">2017-07-31 01:09:47</div>
<div class="t" style="left:934.49px;top:391.50px;font-size:12px;line-height:16px;color:#ccccdc;font-weight:400;transform:scaleX(0.9000);transform-origin:0 0;">1</div>
<div class="t" style="left:5.97px;top:417.80px;font-size:12px;line-height:16px;color:#ccccdc;font-weight:400;transform:scaleX(0.9019);transform-origin:0 0;">envoyproxy/envoy</div>
<div class="t" style="left:200.64px;top:417.80px;font-size:12px;line-height:16px;color:#ccccdc;font-weight:400;transform:scaleX(0.9524);transform-origin:0 0;">1502</div>
<div class="t" style="left:285.22px;top:417.80px;font-size:12px;line-height:16px;color:#ccccdc;font-weight:400;transform:scaleX(0.9261);transform-origin:0 0;">support for http/1.1 -&gt; http2 client upgrade for outbound connections</div>
<div class="t" style="left:735.16px;top:417.80px;font-size:12px;line-height:16px;color:#ccccdc;font-weight:400;transform:scaleX(0.9004);transform-origin:0 0;">2017-08-21 08:02:41</div>
<div class="t" style="left:934.49px;top:417.80px;font-size:12px;line-height:16px;color:#ccccdc;font-weight:400;transform:scaleX(0.9000);transform-origin:0 0;">1</div>
<div class="r" style="left:280.20px;top:412.20px;width:450.50px;height:27.30px;background:transparent;border:1px solid #2d4b7c;box-sizing:border-box;"></div>
<svg class="r" style="left:5px;top:449px" width="7" height="7" viewBox="0 0 10 8"><path d="M1.5 2l3.5 3.5L8.5 2" fill="none" stroke="#ccccdc" stroke-width="1.8"/></svg>
<div class="t" style="left:13.77px;top:444.60px;font-size:13px;line-height:17px;color:#ccccdc;font-weight:400;transform:scaleX(0.9349);transform-origin:0 0;-webkit-text-stroke:0.3px #ccccdc;">3. Contribution (PRs)</div>
<div class="t" style="left:16.23px;top:475.10px;font-size:12px;line-height:16px;color:#ccccdc;font-weight:400;transform:scaleX(0.8796);transform-origin:0 0;-webkit-text-stroke:0.3px #ccccdc;">3.1 Number of New Pull Requests [Select...</div>
<div class="t" style="left:47.61px;top:522.60px;font-size:62.4px;line-height:81px;color:#f2495c;font-weight:400;transform:scaleX(1.0026);transform-origin:0 0;-webkit-text-stroke:1.3px #f2495c;">1775</div>
<div class="t" style="left:465.13px;top:475.20px;font-size:12px;line-height:16px;color:#ccccdc;font-weight:400;transform:scaleX(0.8830);transform-origin:0 0;-webkit-text-stroke:0.3px #ccccdc;">3.2 Total Number of New Pull Requests [Each Month]</div>
<div class="t" style="left:245.47px;top:508.90px;font-size:10.2px;line-height:13px;color:#ccccdc;font-weight:400;transform:scaleX(0.9400);transform-origin:0 0;">300</div>
<div class="r" style="left:264.90px;top:516.01px;width:680.00px;height:1.00px;background:rgba(204,204,220,0.08);"></div>
<div class="t" style="left:245.47px;top:532.40px;font-size:10.2px;line-height:13px;color:#ccccdc;font-weight:400;transform:scaleX(0.9400);transform-origin:0 0;">200</div>
<div class="r" style="left:264.90px;top:539.44px;width:680.00px;height:1.00px;background:rgba(204,204,220,0.08);"></div>
<div class="t" style="left:245.47px;top:556.20px;font-size:10.2px;line-height:13px;color:#ccccdc;font-weight:400;transform:scaleX(0.9400);transform-origin:0 0;">100</div>
<div class="r" style="left:264.90px;top:562.87px;width:680.00px;height:1.00px;background:rgba(204,204,220,0.08);"></div>
<div class="t" style="left:256.11px;top:580.10px;font-size:10.2px;line-height:13px;color:#ccccdc;font-weight:400;transform:scaleX(0.9400);transform-origin:0 0;">0</div>
<div class="r" style="left:264.90px;top:586.30px;width:680.00px;height:1.00px;background:rgba(204,204,220,0.08);"></div>
<div class="r" style="left:267.30px;top:583.42px;width:47.40px;height:3.58px;background:#629f5b;border:1px solid #73bf69;box-sizing:border-box;"></div>
<div class="t" style="left:286.33px;top:572.42px;font-size:10.2px;line-height:13px;color:#ccccdc;font-weight:400;transform:scaleX(0.8600);transform-origin:0 0;text-shadow:0 0 1.5px #181b1f;">11</div>
<div class="t" style="left:264.43px;top:594.20px;font-size:10.5px;line-height:14px;color:#ccccdc;font-weight:400;transform:scaleX(0.8400);transform-origin:0 0;">January 2022</div>
<div class="r" style="left:369.84px;top:524.85px;width:47.40px;height:62.15px;background:#629f5b;border:1px solid #73bf69;box-sizing:border-box;"></div>
<div class="t" style="left:386.22px;top:513.85px;font-size:10.2px;line-height:13px;color:#ccccdc;font-weight:400;transform:scaleX(0.8600);transform-origin:0 0;text-shadow:0 0 1.5px #181b1f;">261</div>
<div class="t" style="left:364.72px;top:594.20px;font-size:10.5px;line-height:14px;color:#ccccdc;font-weight:400;transform:scaleX(0.8400);transform-origin:0 0;">February 2022</div>
<div class="r" style="left:472.38px;top:514.07px;width:47.40px;height:72.93px;background:#629f5b;border:1px solid #73bf69;box-sizing:border-box;"></div>
<div class="t" style="left:488.84px;top:503.07px;font-size:10.2px;line-height:13px;color:#ccccdc;font-weight:400;transform:scaleX(0.8600);transform-origin:0 0;text-shadow:0 0 1.5px #181b1f;">307</div>
<div class="t" style="left:472.66px;top:594.20px;font-size:10.5px;line-height:14px;color:#ccccdc;font-weight:400;transform:scaleX(0.8400);transform-origin:0 0;">March 2022</div>
<div class="r" style="left:574.92px;top:513.37px;width:47.40px;height:73.63px;background:#629f5b;border:1px solid #73bf69;box-sizing:border-box;"></div>
<div class="t" style="left:591.32px;top:502.37px;font-size:10.2px;line-height:13px;color:#ccccdc;font-weight:400;transform:scaleX(0.8600);transform-origin:0 0;text-shadow:0 0 1.5px #181b1f;">310</div>
<div class="t" style="left:579.00px;top:594.20px;font-size:10.5px;line-height:14px;color:#ccccdc;font-weight:400;transform:scaleX(0.8400);transform-origin:0 0;">April 2022</div>
<div class="r" style="left:677.46px;top:518.99px;width:47.40px;height:68.01px;background:#629f5b;border:1px solid #73bf69;box-sizing:border-box;"></div>
<div class="t" style="left:693.81px;top:507.99px;font-size:10.2px;line-height:13px;color:#ccccdc;font-weight:400;transform:scaleX(0.8600);transform-origin:0 0;text-shadow:0 0 1.5px #181b1f;">286</div>
<div class="t" style="left:681.67px;top:594.20px;font-size:10.5px;line-height:14px;color:#ccccdc;font-weight:400;transform:scaleX(0.8400);transform-origin:0 0;">May 2022</div>
<div class="r" style="left:780.00px;top:516.41px;width:47.40px;height:70.59px;background:#629f5b;border:1px solid #73bf69;box-sizing:border-box;"></div>
<div class="t" style="left:796.40px;top:505.41px;font-size:10.2px;line-height:13px;color:#ccccdc;font-weight:400;transform:scaleX(0.8600);transform-origin:0 0;text-shadow:0 0 1.5px #181b1f;">297</div>
<div class="t" style="left:783.26px;top:594.20px;font-size:10.5px;line-height:14px;color:#ccccdc;font-weight:400;transform:scaleX(0.8400);transform-origin:0 0;">June 2022</div>
<div class="r" style="left:882.54px;top:515.01px;width:47.40px;height:71.99px;background:#629f5b;border:1px solid #73bf69;box-sizing:border-box;"></div>
<div class="t" style="left:898.96px;top:504.01px;font-size:10.2px;line-height:13px;color:#ccccdc;font-weight:400;transform:scaleX(0.8600);transform-origin:0 0;text-shadow:0 0 1.5px #181b1f;">303</div>
<div class="t" style="left:887.52px;top:594.20px;font-size:10.5px;line-height:14px;color:#ccccdc;font-weight:400;transform:scaleX(0.8400);transform-origin:0 0;">July 2022</div>
<div class="r" style="left:257.40px;top:618.00px;width:10.00px;height:3.00px;background:#73bf69;border-radius:1.5px;"></div>
<div class="t" style="left:273.09px;top:612.70px;font-size:11px;line-height:14px;color:#ccccdc;font-weight:400;transform:scaleX(0.8100);transform-origin:0 0;">Pull Request Count</div>
<div class="t" style="left:386.33px;top:643.00px;font-size:12px;line-height:16px;color:#ccccdc;font-weight:400;transform:scaleX(0.8771);transform-origin:0 0;-webkit-text-stroke:0.3px #ccccdc;">3.3 Top Contributors By Merged PRs</div>
<svg class="r" style="left:561px;top:647px" width="9" height="8" viewBox="0 0 10 8"><path d="M2 2.5l3 3 3-3" fill="none" stroke="#ccccdc" stroke-width="1.3"/></svg>
<div class="t" style="left:29.07px;top:680.90px;font-size:10.2px;line-height:13px;color:#ccccdc;font-weight:400;transform:scaleX(0.9400);transform-origin:0 0;">200</div>
<div class="r" style="left:48.00px;top:687.60px;width:900.00px;height:1.00px;background:rgba(204,204,220,0.08);"></div>
<div class="t" style="left:29.07px;top:715.30px;font-size:10.2px;line-height:13px;color:#ccccdc;font-weight:400;transform:scaleX(0.9400);transform-origin:0 0;">100</div>
<div class="r" style="left:48.00px;top:721.00px;width:900.00px;height:1.00px;background:rgba(204,204,220,0.08);"></div>
<div class="t" style="left:39.71px;top:747.60px;font-size:10.2px;line-height:13px;color:#ccccdc;font-weight:400;transform:scaleX(0.9400);transform-origin:0 0;">0</div>
<div class="r" style="left:48.00px;top:754.40px;width:900.00px;height:1.00px;background:rgba(204,204,220,0.08);"></div>
<div class="r" style="left:19px;top:714.85px;width:0;height:0;"><div class="t" style="left:0;top:0;transform:translate(-50%,-50%) rotate(-90deg);font-size:10px;line-height:12px;color:#ccccdc;"><span style="display:inline-block;transform:scaleX(0.855);">Merged PR Count</span></div></div>
<div class="r" style="left:51.60px;top:683.39px;width:22.20px;height:71.61px;background:#4e7e49;border:1px solid #62a75a;box-sizing:border-box;"></div>
<div class="t" style="left:55.23px;top:672.04px;font-size:10.2px;line-height:13px;color:#ccccdc;font-weight:400;transform:scaleX(0.8800);transform-origin:0 0;">212</div>
<div class="t" style="left:51.66px;top:762.70px;font-size:10.5px;line-height:14px;color:#ccccdc;font-weight:400;transform:scaleX(0.8600);transform-origin:0 0;">phlax</div>
<div class="r" style="left:96.60px;top:697.75px;width:22.20px;height:57.25px;background:#4e7e49;border:1px solid #62a75a;box-sizing:border-box;"></div>
<div class="t" style="left:100.09px;top:686.40px;font-size:10.2px;line-height:13px;color:#ccccdc;font-weight:400;transform:scaleX(0.8800);transform-origin:0 0;">169</div>
<div class="t" style="left:75.19px;top:762.70px;font-size:10.5px;line-height:14px;color:#ccccdc;font-weight:400;transform:scaleX(0.8600);transform-origin:0 0;">dependabot[bot]</div>
<div class="r" style="left:141.60px;top:712.78px;width:22.20px;height:42.22px;background:#4e7e49;border:1px solid #62a75a;box-sizing:border-box;"></div>
<div class="t" style="left:145.00px;top:701.43px;font-size:10.2px;line-height:13px;color:#ccccdc;font-weight:400;transform:scaleX(0.8800);transform-origin:0 0;">124</div>
<div class="t" style="left:132.20px;top:762.70px;font-size:10.5px;line-height:14px;color:#ccccdc;font-weight:400;transform:scaleX(0.8600);transform-origin:0 0;">alyssawilk</div>
<div class="r" style="left:186.60px;top:737.83px;width:22.20px;height:17.17px;background:#4e7e49;border:1px solid #62a75a;box-sizing:border-box;"></div>
<div class="t" style="left:192.83px;top:726.48px;font-size:10.2px;line-height:13px;color:#ccccdc;font-weight:400;transform:scaleX(0.8800);transform-origin:0 0;">49</div>
<div class="t" style="left:162.51px;top:762.70px;font-size:10.5px;line-height:14px;color:#ccccdc;font-weight:400;transform:scaleX(0.8600);transform-origin:0 0;">RyanTheOptimist</div>
<div class="r" style="left:231.60px;top:740.17px;width:22.20px;height:14.83px;background:#4e7e49;border:1px solid #62a75a;box-sizing:border-box;"></div>
<div class="t" style="left:237.85px;top:728.82px;font-size:10.2px;line-height:13px;color:#ccccdc;font-weight:400;transform:scaleX(0.8800);transform-origin:0 0;">42</div>
<div class="t" style="left:222.29px;top:762.70px;font-size:10.5px;line-height:14px;color:#ccccdc;font-weight:400;transform:scaleX(0.8600);transform-origin:0 0;">nehre-x41</div>
<div class="r" style="left:276.60px;top:742.18px;width:22.20px;height:12.82px;background:#4e7e49;border:1px solid #62a75a;box-sizing:border-box;"></div>
<div class="t" style="left:282.74px;top:730.83px;font-size:10.2px;line-height:13px;color:#ccccdc;font-weight:400;transform:scaleX(0.8800);transform-origin:0 0;">36</div>
<div class="t" style="left:266.10px;top:762.70px;font-size:10.5px;line-height:14px;color:#ccccdc;font-weight:400;transform:scaleX(0.8600);transform-origin:0 0;">kyessenov</div>
<div class="r" style="left:321.60px;top:742.51px;width:22.20px;height:12.49px;background:#4e7e49;border:1px solid #62a75a;box-sizing:border-box;"></div>
<div class="t" style="left:327.74px;top:731.16px;font-size:10.2px;line-height:13px;color:#ccccdc;font-weight:400;transform:scaleX(0.8800);transform-origin:0 0;">35</div>
<div class="t" style="left:323.15px;top:762.70px;font-size:10.5px;line-height:14px;color:#ccccdc;font-weight:400;transform:scaleX(0.8600);transform-origin:0 0;">keith</div>
<div class="r" style="left:366.60px;top:743.51px;width:22.20px;height:11.49px;background:#4e7e49;border:1px solid #62a75a;box-sizing:border-box;"></div>
<div class="t" style="left:372.79px;top:732.16px;font-size:10.2px;line-height:13px;color:#ccccdc;font-weight:400;transform:scaleX(0.8800);transform-origin:0 0;">32</div>
<div class="t" style="left:351.99px;top:762.70px;font-size:10.5px;line-height:14px;color:#ccccdc;font-weight:400;transform:scaleX(0.8600);transform-origin:0 0;">mattklein123</div>
<div class="r" style="left:411.60px;top:744.18px;width:22.20px;height:10.82px;background:#4e7e49;border:1px solid #62a75a;box-sizing:border-box;"></div>
<div class="t" style="left:417.72px;top:732.83px;font-size:10.2px;line-height:13px;color:#ccccdc;font-weight:400;transform:scaleX(0.8800);transform-origin:0 0;">30</div>
<div class="t" style="left:404.82px;top:762.70px;font-size:10.5px;line-height:14px;color:#ccccdc;font-weight:400;transform:scaleX(0.8600);transform-origin:0 0;">wbpcode</div>
<div class="r" style="left:456.60px;top:745.18px;width:22.20px;height:9.82px;background:#4e7e49;border:1px solid #62a75a;box-sizing:border-box;"></div>
<div class="t" style="left:462.72px;top:733.83px;font-size:10.2px;line-height:13px;color:#ccccdc;font-weight:400;transform:scaleX(0.8800);transform-origin:0 0;">27</div>
<div class="t" style="left:443.36px;top:762.70px;font-size:10.5px;line-height:14px;color:#ccccdc;font-weight:400;transform:scaleX(0.8600);transform-origin:0 0;">ravenblackx</div>
<div class="r" style="left:501.60px;top:745.52px;width:22.20px;height:9.48px;background:#4e7e49;border:1px solid #62a75a;box-sizing:border-box;"></div>
<div class="t" style="left:507.67px;top:734.17px;font-size:10.2px;line-height:13px;color:#ccccdc;font-weight:400;transform:scaleX(0.8800);transform-origin:0 0;">26</div>
<div class="t" style="left:499.83px;top:762.70px;font-size:10.5px;line-height:14px;color:#ccccdc;font-weight:400;transform:scaleX(0.8600);transform-origin:0 0;">soulxu</div>
<div class="r" style="left:546.60px;top:746.18px;width:22.20px;height:8.82px;background:#4e7e49;border:1px solid #62a75a;box-sizing:border-box;"></div>
<div class="t" style="left:552.61px;top:734.83px;font-size:10.2px;line-height:13px;color:#ccccdc;font-weight:400;transform:scaleX(0.8800);transform-origin:0 0;">24</div>
<div class="t" style="left:540.72px;top:762.70px;font-size:10.5px;line-height:14px;color:#ccccdc;font-weight:400;transform:scaleX(0.8600);transform-origin:0 0;">jmarantz</div>
<div class="r" style="left:591.60px;top:746.52px;width:22.20px;height:8.48px;background:#4e7e49;border:1px solid #62a75a;box-sizing:border-box;"></div>
<div class="t" style="left:597.67px;top:735.17px;font-size:10.2px;line-height:13px;color:#ccccdc;font-weight:400;transform:scaleX(0.8800);transform-origin:0 0;">23</div>
<div class="t" style="left:580.58px;top:762.70px;font-size:10.5px;line-height:14px;color:#ccccdc;font-weight:400;transform:scaleX(0.8600);transform-origin:0 0;">bencebeky</div>
<div class="r" style="left:636.60px;top:746.52px;width:22.20px;height:8.48px;background:#4e7e49;border:1px solid #62a75a;box-sizing:border-box;"></div>
<div class="t" style="left:642.67px;top:735.17px;font-size:10.2px;line-height:13px;color:#ccccdc;font-weight:400;transform:scaleX(0.8800);transform-origin:0 0;">23</div>
<div class="t" style="left:625.33px;top:762.70px;font-size:10.5px;line-height:14px;color:#ccccdc;font-weight:400;transform:scaleX(0.8600);transform-origin:0 0;">danzh2010</div>
<div class="r" style="left:681.60px;top:746.85px;width:22.20px;height:8.15px;background:#4e7e49;border:1px solid #62a75a;box-sizing:border-box;"></div>
<div class="t" style="left:687.72px;top:735.50px;font-size:10.2px;line-height:13px;color:#ccccdc;font-weight:400;transform:scaleX(0.8800);transform-origin:0 0;">22</div>
<div class="t" style="left:673.35px;top:762.70px;font-size:10.5px;line-height:14px;color:#ccccdc;font-weight:400;transform:scaleX(0.8600);transform-origin:0 0;">daixiang0</div>
<div class="r" style="left:726.60px;top:747.19px;width:22.20px;height:7.81px;background:#4e7e49;border:1px solid #62a75a;box-sizing:border-box;"></div>
<div class="t" style="left:732.70px;top:735.84px;font-size:10.2px;line-height:13px;color:#ccccdc;font-weight:400;transform:scaleX(0.8800);transform-origin:0 0;">21</div>
<div class="t" style="left:715.12px;top:762.70px;font-size:10.5px;line-height:14px;color:#ccccdc;font-weight:400;transform:scaleX(0.8600);transform-origin:0 0;">yanavlasov</div>
<div class="r" style="left:771.60px;top:747.19px;width:22.20px;height:7.81px;background:#4e7e49;border:1px solid #62a75a;box-sizing:border-box;"></div>
<div class="t" style="left:777.70px;top:735.84px;font-size:10.2px;line-height:13px;color:#ccccdc;font-weight:400;transform:scaleX(0.8800);transform-origin:0 0;">21</div>
<div class="t" style="left:763.20px;top:762.70px;font-size:10.5px;line-height:14px;color:#ccccdc;font-weight:400;transform:scaleX(0.8600);transform-origin:0 0;">KBaichoo</div>
<div class="r" style="left:816.60px;top:748.19px;width:22.20px;height:6.81px;background:#4e7e49;border:1px solid #62a75a;box-sizing:border-box;"></div>
<div class="t" style="left:822.56px;top:736.84px;font-size:10.2px;line-height:13px;color:#ccccdc;font-weight:400;transform:scaleX(0.8800);transform-origin:0 0;">18</div>
<div class="t" style="left:811.90px;top:762.70px;font-size:10.5px;line-height:14px;color:#ccccdc;font-weight:400;transform:scaleX(0.8600);transform-origin:0 0;">lambdai</div>
<div class="r" style="left:861.60px;top:748.52px;width:22.20px;height:6.48px;background:#4e7e49;border:1px solid #62a75a;box-sizing:border-box;"></div>
<div class="t" style="left:867.61px;top:737.17px;font-size:10.2px;line-height:13px;color:#ccccdc;font-weight:400;transform:scaleX(0.8800);transform-origin:0 0;">17</div>
<div class="t" style="left:854.30px;top:762.70px;font-size:10.5px;line-height:14px;color:#ccccdc;font-weight:400;transform:scaleX(0.8600);transform-origin:0 0;">giantcroc</div>
<div class="r" style="left:906.60px;top:748.52px;width:22.20px;height:6.48px;background:#4e7e49;border:1px solid #62a75a;box-sizing:border-box;"></div>
<div class="t" style="left:912.61px;top:737.17px;font-size:10.2px;line-height:13px;color:#ccccdc;font-weight:400;transform:scaleX(0.8800);transform-origin:0 0;">17</div>
<div class="t" style="left:898.69px;top:762.70px;font-size:10.5px;line-height:14px;color:#ccccdc;font-weight:400;transform:scaleX(0.8600);transform-origin:0 0;">adisuissa</div>
<div class="r" style="left:20.40px;top:785.80px;width:10.50px;height:3.00px;background:#73bf69;border-radius:1.5px;"></div>
<div class="t" style="left:36.42px;top:781.10px;font-size:11px;line-height:14px;color:#ccccdc;font-weight:400;transform:scaleX(0.8136);transform-origin:0 0;">merged_pull_request_count</div>
</body></html>
